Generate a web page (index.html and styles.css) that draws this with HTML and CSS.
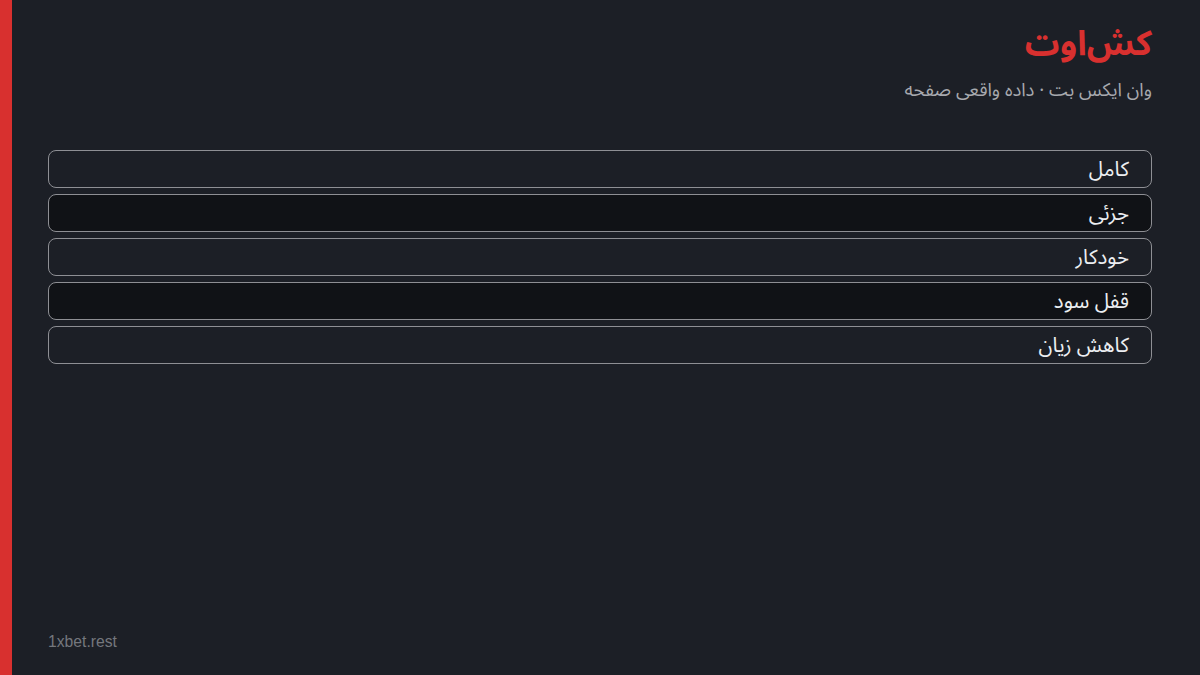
FILE: index.html
```html
<!DOCTYPE html>
<html lang="fa" dir="rtl">
<head>
<meta charset="UTF-8">
<meta name="viewport" content="width=device-width, initial-scale=1.0">
<title>کش‌اوت</title>
<link rel="stylesheet" href="styles.css">
</head>
<body>

<div class="page">
    <header class="head">
        <h1>کش‌اوت</h1>
        <p class="sub">وان ایکس بت · داده واقعی صفحه</p>
    </header>

    <ul class="modes">
        <li class="mode">کامل</li>
        <li class="mode dark">جزئی</li>
        <li class="mode">خودکار</li>
        <li class="mode dark">قفل سود</li>
        <li class="mode">کاهش زیان</li>
    </ul>

    <footer class="foot" dir="ltr">1xbet.rest</footer>
</div>

</body>
</html>
```

FILE: styles.css
```css
* {
    margin: 0;
    padding: 0;
    box-sizing: border-box;
}
html, body {
    height: 100%;
}
body {
    background: #1c1f26;
    color: #fff;
    font-family: 'Noto Sans Arabic', 'Noto Sans Arabic UI', 'DejaVu Sans', sans-serif;
    border-left: 12px solid #d8302f;
}
.page {
    height: 100%;
    display: flex;
    flex-direction: column;
    padding: 24px 48px 24px 36px;
}
h1 {
    font-size: 34.5px;
    font-weight: bold;
    color: #d8302f;
    line-height: 40px;
}
.sub {
    margin-top: 13px;
    font-size: 18.5px;
    line-height: 28px;
    color: #a7a9ae;
}
.modes {
    list-style: none;
    margin-top: 45px;
    display: flex;
    flex-direction: column;
    gap: 6px;
}
.mode {
    height: 38px;
    border: 1px solid #8e8f94;
    border-radius: 8px;
    padding: 0 22px;
    display: flex;
    align-items: center;
    font-size: 20.5px;
    color: #eceef1;
}
.mode.dark {
    background: #101216;
}
.foot {
    margin-top: auto;
    text-align: left;
    font-family: 'Liberation Sans', Arial, sans-serif;
    font-size: 15.7px;
    color: #74777d;
}
```
